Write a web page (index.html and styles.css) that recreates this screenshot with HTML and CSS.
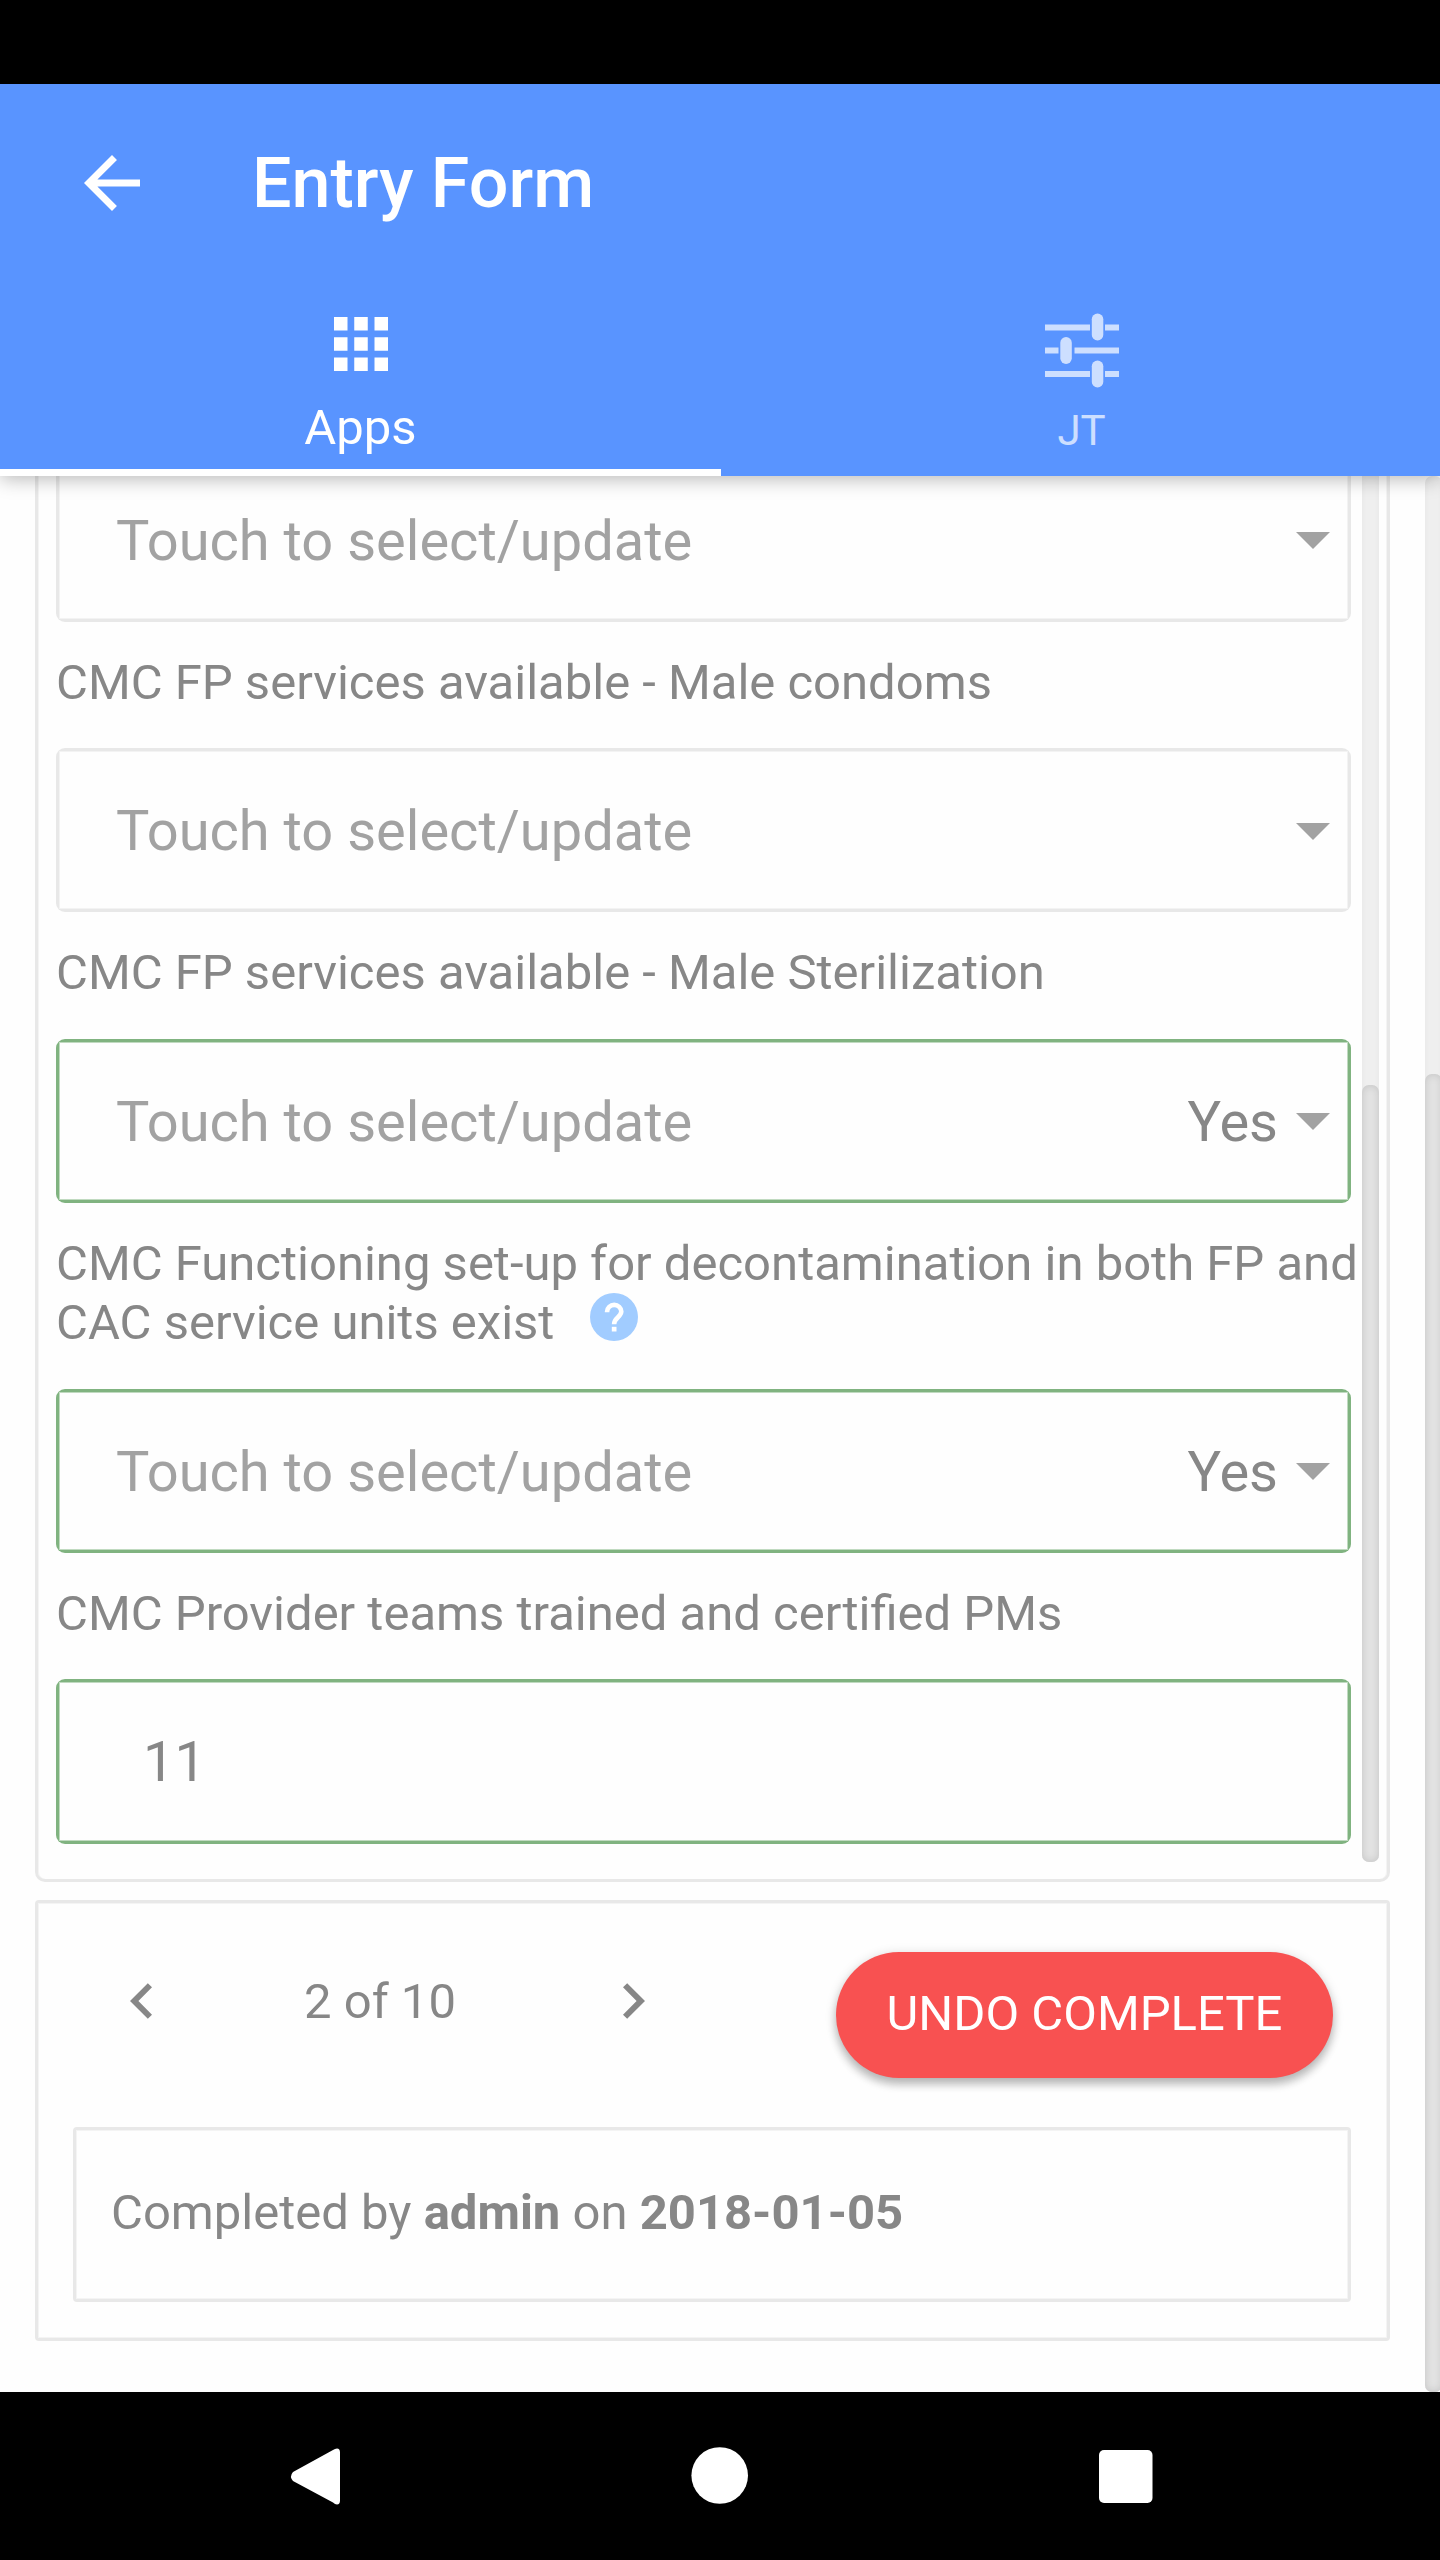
FILE: index.html
```html
<!DOCTYPE html>
<html lang="en">
<head>
<meta charset="utf-8">
<title>Entry Form</title>
<link rel="stylesheet" href="styles.css">
</head>
<body>
<div class="screen">
  <div class="status-bar"></div>
  <header class="header">
    <div class="toolbar">
      <svg class="back" viewBox="0 0 24 24"><path d="M20 11H7.83l5.59-5.59L12 4l-8 8 8 8 1.41-1.41L7.83 13H20z"/></svg>
      <h1 class="title">Entry Form</h1>
    </div>
    <nav class="tabs">
      <a class="tab tab-active">
        <svg class="icon-apps" viewBox="4 4 16 16"><path d="M4 8h4V4H4zm6 12h4v-4h-4zm-6 0h4v-4H4zm0-6h4v-4H4zm6 0h4v-4h-4zm6-10v4h4V4zm-6 4h4V4h-4zm6 6h4v-4h-4zm0 6h4v-4h-4z"/></svg>
        <span class="tab-label">Apps</span>
      </a>
      <a class="tab tab-user">
        <svg class="icon-options" viewBox="0 0 74 74"><path d="M0 11h45v6H0zM60 11h14v6H60zM0 34h13.500v6H0zM29.500 34H74v6H29.500zM0 57.500h45v6H0zM60 57.500h14v6H60z"/><rect x="46.800" y="0" width="11.500" height="27" rx="5.750"/><rect x="15.300" y="23.500" width="11.500" height="27" rx="5.750"/><rect x="46.800" y="47" width="11.500" height="27" rx="5.750"/></svg>
        <span class="tab-label tab-label-small">JT</span>
      </a>
    </nav>
  </header>
  <main class="content">
    <section class="entries">
      <div class="fields">
        <div class="box"><span class="hint">Touch to select/update</span><i class="caret"></i></div>
        <label class="label">CMC FP services available - Male condoms</label>
        <div class="box"><span class="hint">Touch to select/update</span><i class="caret"></i></div>
        <label class="label">CMC FP services available - Male Sterilization</label>
        <div class="box saved"><span class="hint">Touch to select/update</span><span class="value">Yes</span><i class="caret"></i></div>
        <label class="label">CMC Functioning set-up for decontamination in both FP and<br>CAC service units exist<svg class="help" viewBox="0 0 48 48"><circle class="help-disc" cx="24" cy="24" r="24"/><path class="help-hook" d="M17.100 19.200v-.6a7.100 6.700 0 0 1 14.200 0c0 5.400-7.200 6-7.200 12.600"/><path class="help-dot" d="M21.800 33.800h4.700v4.700h-4.700z"/></svg></label>
        <div class="box saved"><span class="hint">Touch to select/update</span><span class="value">Yes</span><i class="caret"></i></div>
        <label class="label">CMC Provider teams trained and certified PMs</label>
        <div class="box saved"><span class="number">11</span></div>
      </div>
      <div class="track track-inner"><div class="thumb"></div></div>
    </section>
    <section class="footer-card">
      <div class="actions">
        <div class="pager">
          <svg class="chevron" viewBox="8 6 7.410 12"><path d="M15.410 7.410L14 6l-6 6 6 6 1.410-1.410L10.830 12z"/></svg>
          <span class="count">2 of 10</span>
          <svg class="chevron" viewBox="8.590 6 7.410 12"><path d="M10 6L8.590 7.410 13.170 12l-4.580 4.590L10 18l6-6z"/></svg>
        </div>
        <button class="undo">UNDO COMPLETE</button>
      </div>
      <p class="completed">Completed by <b>admin</b> on <b>2018-01-05</b></p>
    </section>
    <div class="track track-outer"><div class="thumb"></div></div>
  </main>
  <nav class="system-nav">
    <svg viewBox="0 0 1440 168"><path d="M337 56.500q3 0 3 4v48q0 4-3 4-2 0-4-2L293 89q-4-4.500 0-9L333 58q2-1.500 4-1.500z"/><circle cx="719.700" cy="83.500" r="28.300"/><rect x="1099" y="58" width="53.500" height="53" rx="5"/></svg>
  </nav>
</div>
</body>
</html>
```
FILE: styles.css
```css
* { box-sizing: border-box; }
body {
  margin: 0;
  font-family: Roboto, "Liberation Sans", sans-serif;
  font-size: 49px;
  color: #878787;
  background: #fefefe;
}
.screen {
  display: flex;
  flex-direction: column;
  width: 1440px;
  height: 2560px;
  overflow: hidden;
}
.status-bar { height: 84px; background: #000; }

.header {
  position: relative;
  z-index: 2;
  height: 392px;
  background: #5994ff;
  color: #fff;
  fill: #fff;
  box-shadow: 0 3px 18px rgba(0, 0, 0, .28);
}
.toolbar {
  display: flex;
  align-items: center;
  height: 197px;
  padding-left: 70px;
}
.back { width: 84px; height: 84px; }
.title {
  margin: 0 0 0 98px;
  font-size: 70px;
  font-weight: 500;
  line-height: 82px;
}
.tabs { display: flex; height: 195px; }
.tab {
  flex: 1;
  display: flex;
  flex-direction: column;
  align-items: center;
  padding-top: 36px;
}
.tab-active { flex: 0 0 721px; box-shadow: inset 0 -7px #fff; }
.icon-apps { width: 54px; height: 54px; }
.tab-label { margin-top: 27px; line-height: 59px; }
.tab-user { padding: 32px 0 0 2px; opacity: .7; }
.icon-options { width: 74px; height: 75px; }
.tab-label-small { margin-top: 14px; font-size: 42px; line-height: 58px; }

.content {
  position: relative;
  flex: 1;
  display: flex;
  flex-direction: column;
  padding: 0 50px 51px 35px;
}
.entries {
  display: flex;
  height: 1406px;
  border: 3px solid #e8e8e8;
  border-top: 0;
  border-radius: 0 0 10px 10px;
  box-shadow: inset -1px 0 #f4f4f4, inset 1px 0 #f4f4f4;
}
.fields {
  display: flex;
  flex-direction: column;
  justify-content: flex-end;
  width: 1324px;
  height: 1367.500px;
  padding-left: 18px;
  overflow: hidden;
}
.box {
  --edge: #e8e8e8;
  --edge-soft: #f3f3f3;
  flex: none;
  display: flex;
  align-items: center;
  width: 1295px;
  height: 164.300px;
  padding: 2px 21px 0 60px;
  border-radius: 9px;
  background:
    linear-gradient(#fefefe, #fefefe) center / calc(100% - 8px) calc(100% - 8px) no-repeat,
    linear-gradient(var(--edge-soft), var(--edge-soft)) center / calc(100% - 6px) calc(100% - 6px) no-repeat,
    var(--edge);
}
.saved { --edge: #80b380; --edge-soft: #c0dac0; }
.hint { flex: 1; font-size: 56px; color: #a2a2a2; }
.value { font-size: 56px; }
.caret {
  margin-left: 18px;
  border: 17px solid transparent;
  border-top-color: #a2a2a2;
  border-bottom: 0;
}
.number { padding-left: 27px; font-size: 56px; }
.label {
  flex: none;
  padding: 31px 0 36.400px;
  line-height: 59px;
  white-space: nowrap;
}
.help {
  width: 48px;
  height: 48px;
  margin: -10px 0 -2px 36px;
}
.help-disc { fill: #a1ccff; }
.help-hook { fill: none; stroke: #fff; stroke-width: 4.600; }
.help-dot { fill: #fff; }

.track { width: 17px; background: #efefef; box-shadow: inset 0 0 6px rgba(0, 0, 0, .04); border-radius: 7px; }
.thumb {
  border-radius: 7px;
  background: #e3e3e3;
  box-shadow: inset 0 0 9px rgba(0, 0, 0, .14);
}
.track-inner { height: 1385.500px; padding-top: 608.500px; border-top-left-radius: 0; border-top-right-radius: 0; }
.track-inner .thumb { height: 777px; }
.track-outer { position: absolute; top: 0; right: -2px; height: 1916px; padding-top: 598px; }
.track-outer .thumb { height: 1318px; }

.footer-card {
  height: 441px;
  margin-top: 18px;
  padding: 49px 36px 36px 35px;
  border: 3px solid #e8e8e8;
  border-radius: 4px;
  box-shadow: inset 0 0 0 1px #f4f4f4;
}
.actions { display: flex; justify-content: space-between; padding-right: 18px; }
.pager {
  display: flex;
  align-items: center;
  justify-content: space-between;
  width: 515px;
  height: 98px;
  margin-left: 57px;
}
.chevron { width: 22px; height: 36px; fill: #878787; }
.count { margin-right: 15px; padding-top: 2px; line-height: 58px; }
.undo {
  width: 497px;
  height: 126px;
  padding: 0 0 3px;
  border: 0;
  border-radius: 63px;
  background: #f85151;
  color: #fff;
  font: 400 49px Roboto, sans-serif;
  box-shadow: 0 7px 8px rgba(0, 0, 0, .2), 0 2px 12px rgba(0, 0, 0, .16);
}
.completed {
  height: 175px;
  margin: 49px 0 0;
  padding: 0 35px;
  border: 3px solid #e8e8e8;
  border-radius: 4px;
  box-shadow: inset 0 0 0 1px #f4f4f4;
  line-height: 166px;
}
.system-nav { height: 168px; background: #000; fill: #fff; }
.system-nav svg { display: block; width: 1440px; height: 168px; }
```
